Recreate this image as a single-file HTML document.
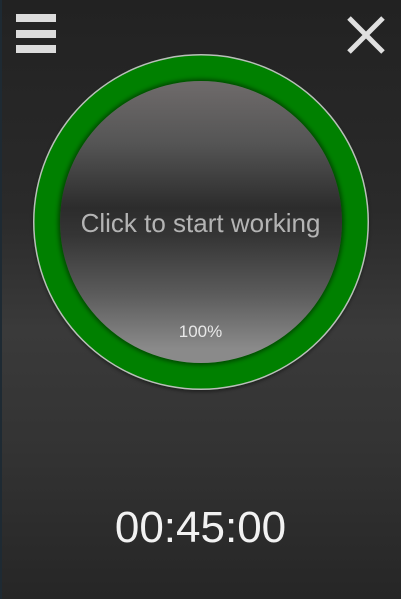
<!DOCTYPE html>
<html><head><style>
html,body{margin:0;padding:0;}
body{width:401px;height:599px;overflow:hidden;position:relative;font-family:"Liberation Sans",sans-serif;
background:linear-gradient(to bottom,#222 0%,#2a2a2a 35%,#3a3a3a 55%,#333 75%,#262626 100%);}
.edge{position:absolute;left:0;top:0;width:2px;height:599px;background:#1e2a33;}
.bar{position:absolute;left:16px;width:40px;height:8px;background:#dcdcdc;}
.ring{position:absolute;left:33px;top:54px;width:336px;height:336px;border-radius:50%;background:#008000;box-shadow:0 0 0 1.5px #bcbcbc inset,0 2px 3px rgba(0,0,0,.4);}
.inner{position:absolute;left:60px;top:81px;width:282px;height:282px;border-radius:50%;
background:linear-gradient(to bottom,#6f6b6b 0%,#555 22%,#2c2c2c 45%,#353535 55%,#5a5a5a 75%,#8a8a8a 95%);
box-shadow:0 0 4px 2px rgba(0,0,0,.45);}
.t1{position:absolute;left:0;width:401px;top:208px;text-align:center;color:#b4b4b4;font-size:26px;}
.t2{position:absolute;left:0;width:401px;top:322px;text-align:center;color:#e8e8e8;font-size:17px;}
.time{position:absolute;left:0;width:401px;top:503px;text-align:center;color:#f2f2f2;font-size:44px;}
</style></head><body>
<div class="edge"></div>
<div class="bar" style="top:14px"></div>
<div class="bar" style="top:30px"></div>
<div class="bar" style="top:45px"></div>
<svg style="position:absolute;left:346px;top:15px" width="40" height="40"><path d="M3 3L37 37M37 3L3 37" stroke="#e0e0e0" stroke-width="5"/></svg>
<div class="ring"></div>
<div class="inner"></div>
<div class="t1">Click to start working</div>
<div class="t2">100%</div>
<div class="time">00:45:00</div>
</body></html>
